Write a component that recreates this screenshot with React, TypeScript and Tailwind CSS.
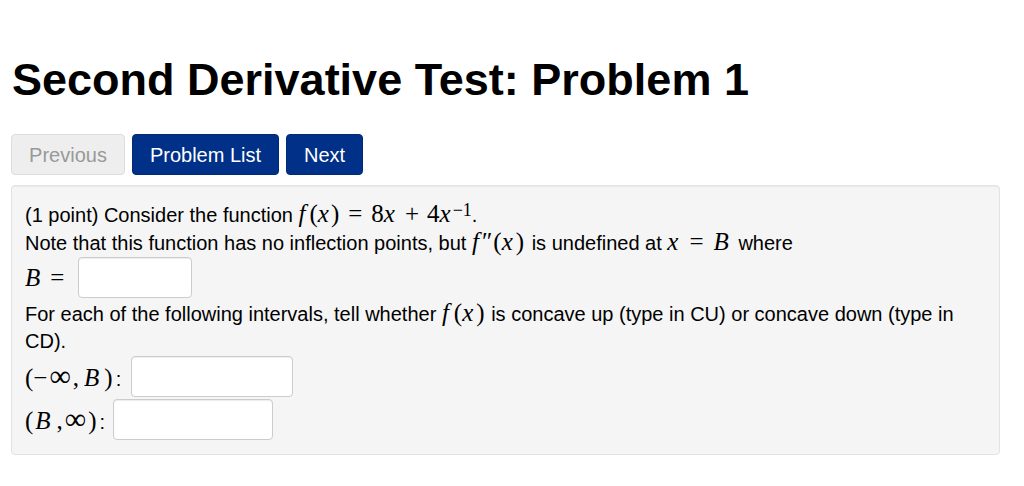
import React from 'react';

const serif = "font-['Liberation_Serif','DejaVu_Serif',serif]";

// inline math helpers (MathJax-like, scaled up against the sans text)
const M: React.FC<{ children: React.ReactNode }> = ({ children }) => (
  <span className={`${serif} text-[25px] leading-none whitespace-nowrap`}>{children}</span>
);
const V: React.FC<{ children: React.ReactNode; r?: string }> = ({ children, r = 'mr-[2px]' }) => (
  <span className={`italic ${r}`}>{children}</span>
);
const Op: React.FC<{ children: React.ReactNode; m?: string }> = ({ children, m = 'mx-[8px]' }) => (
  <span className={m}>{children}</span>
);
const Inf: React.FC<{ c?: string }> = ({ c = '' }) => <span className={`text-[30px] ${c}`}>∞</span>;

const Field: React.FC<{ w: string }> = ({ w }) => (
  <input
    type="text"
    className={`${w} h-[41px] bg-white border border-[#cccccc] rounded-[4px] shadow-[inset_0_1px_1px_rgba(0,0,0,0.075)] outline-none px-2`}
  />
);

const App: React.FC = () => {
  return (
    <div className="min-h-[486px] bg-white px-[11px] pt-[55px] text-[#000] font-['Liberation_Sans',Arial,sans-serif]">
      <h1 className="text-[45px] font-bold leading-[49px] ml-[1px]">Second Derivative Test: Problem 1</h1>

      <div className="mt-[30px] flex gap-[7px]">
        <button className="h-[41px] w-[114px] rounded-[4px] border border-[#dddddd] bg-[#eeeeee] text-[#999999] text-[20px]">
          Previous
        </button>
        <button className="h-[41px] w-[147px] rounded-[4px] border border-[#002a75] bg-[#003087] text-white text-[20px]">
          Problem List
        </button>
        <button className="h-[41px] w-[77px] rounded-[4px] border border-[#002a75] bg-[#003087] text-white text-[20px]">
          Next
        </button>
      </div>

      <div className="mt-[10px] w-[989px] rounded-[4px] border border-[#e3e3e3] bg-[#f5f5f5] shadow-[inset_0_1px_1px_rgba(0,0,0,0.05)] pl-[13px] pr-[12px] pt-[15px] pb-[14px] text-[20px] leading-[27px]">
        <p>
          (1 point) Consider the function{' '}
          <M>
            <V r="mr-[4px]">f</V>(<V>x</V>)<Op m="mx-[9px]">=</Op>8<V>x</V>
            <Op>+</Op>4<V>x</V>
            <sup className="text-[18px] relative -top-[6px]">−1</sup>
          </M>
          .
        </p>
        <p>
          Note that this function has no inflection points, but{' '}
          <M>
            <V r="mr-[3px]">f</V>
            <span>″</span>
            <span className="ml-[1px]">(</span>
            <V r="mr-[3px]">x</V>
            <span className="mr-[2px]">)</span>
          </M>{' '}
          is undefined at{' '}
          <M>
            <V r="mr-[1px]">x</V>
            <Op m="mx-[10px]">=</Op>
            <V r="mr-[4px]">B</V>
          </M>{' '}
          where
        </p>
        <div className="mt-0 flex items-center">
          <M>
            <V r="">B</V>
            <span className="ml-[10px]">=</span>
          </M>
          <span className="ml-[14px]">
            <Field w="w-[114px]" />
          </span>
        </div>
        <p className="mt-[2px] whitespace-nowrap">
          For each of the following intervals, tell whether{' '}
          <M>
            <V r="mr-[4px]">f</V>
            <span className="ml-[1px]">(</span>
            <V r="mr-[3px]">x</V>
            <span className="mr-[1px]">)</span>
          </M>{' '}
          is concave up (type in CU) or concave down (type in
          <br />
          CD).
        </p>
        <div className="mt-[1px] flex items-center">
          <span>
            <M>
              (−<Inf c="ml-[2px]" />
              <span className="ml-[2px]">,</span>
              <V r="ml-[5px] mr-[5px]">B</V>)
            </M>
            <span className="ml-[3px]">:</span>
          </span>
          <span className="ml-[10px]">
            <Field w="w-[162px]" />
          </span>
        </div>
        <div className="mt-[2px] flex items-center">
          <span>
            <M>
              (<V r="ml-[2px] mr-[6px]">B</V>,
              <Inf c="ml-[2px] mr-[2px]" />)
            </M>
            <span className="ml-[3px]">:</span>
          </span>
          <span className="ml-[8px]">
            <Field w="w-[160px]" />
          </span>
        </div>
      </div>
    </div>
  );
};

export default App;
